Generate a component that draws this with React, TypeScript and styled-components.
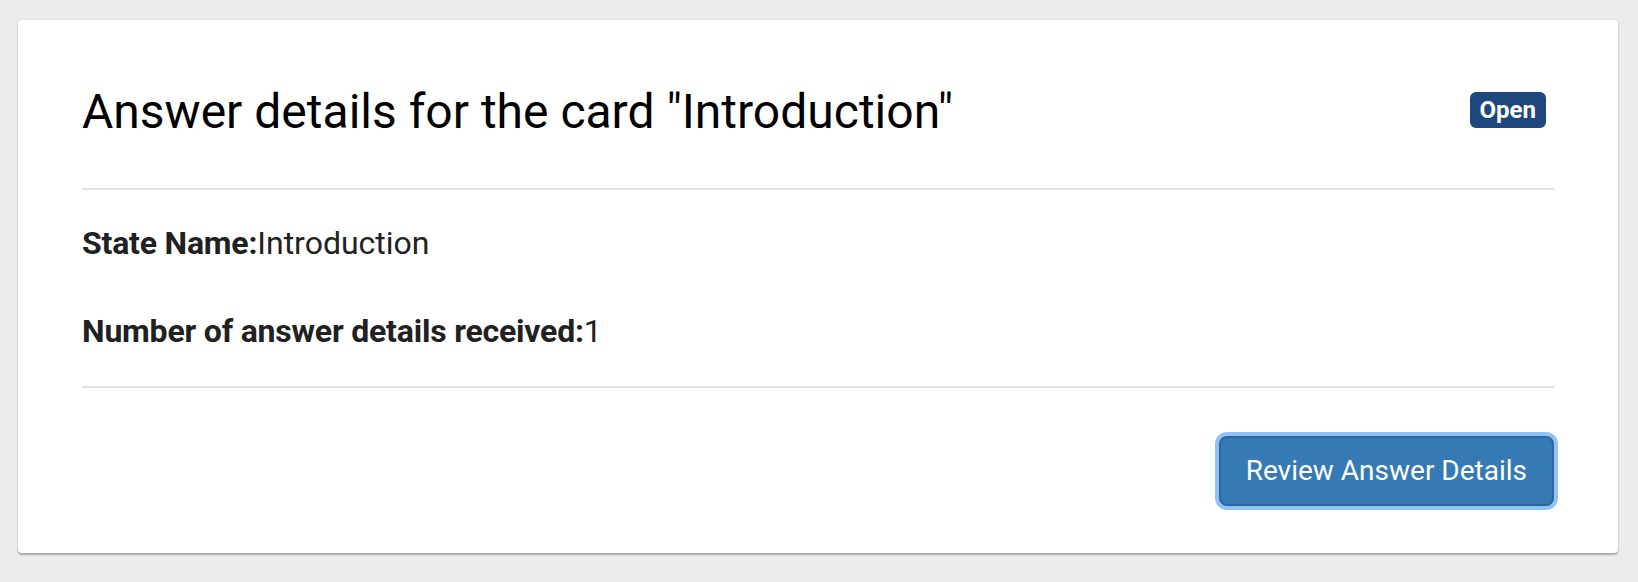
import React from "react";
import styled, { createGlobalStyle } from "styled-components";

const GlobalStyle = createGlobalStyle`
  html, body {
    margin: 0;
    padding: 0;
    background: #ececec;
    font-family: Roboto, "Liberation Sans", Arial, sans-serif;
  }
  * { box-sizing: border-box; }
`;

const Page = styled.div`
  padding: 20px 20px 20px 18px;
`;

const Card = styled.section`
  background: #ffffff;
  border-radius: 4px;
  box-shadow: 0 2px 2px rgba(0, 0, 0, 0.28), 0 0 2px rgba(0, 0, 0, 0.1);
  padding: 64px 64px 47px;
`;

const Header = styled.header`
  display: flex;
  align-items: flex-start;
  justify-content: space-between;
  padding-bottom: 48px;
  border-bottom: 2px solid #e3e3e3;
`;

const Title = styled.h3`
  margin: 0;
  font-size: 48px;
  line-height: 56px;
  font-weight: 400;
  color: #000000;
`;

const Badge = styled.span`
  margin: 8px 8px 0 0;
  background: #1e487d;
  color: #ffffff;
  font-size: 24px;
  font-weight: 700;
  line-height: 28px;
  padding: 4px 10px;
  border-radius: 6px;
`;

const Details = styled.div`
  display: flex;
  flex-direction: column;
  gap: 40px;
  padding: 29px 0 31px;
  border-bottom: 2px solid #dde1e6;
`;

const DetailRow = styled.p`
  margin: 0;
  font-size: 32px;
  line-height: 48px;
  color: #212121;
`;

const Label = styled.strong`
  font-weight: 700;
  letter-spacing: -0.2px;
`;

const Footer = styled.div`
  display: flex;
  justify-content: flex-end;
  padding-top: 48px;
`;

const PrimaryButton = styled.button`
  font-family: inherit;
  font-size: 28px;
  line-height: 40px;
  padding: 13px 25px;
  color: #ffffff;
  background: #367ab5;
  border: 2px solid #2d6699;
  border-radius: 8px;
  box-shadow: 0 0 0 4px #8fc2f6;
  cursor: pointer;
`;

export default function App() {
  return (
    <>
      <GlobalStyle />
      <Page>
        <Card>
          <Header>
            <Title>Answer details for the card "Introduction"</Title>
            <Badge>Open</Badge>
          </Header>
          <Details>
            <DetailRow>
              <Label>State Name:</Label>Introduction
            </DetailRow>
            <DetailRow>
              <Label>Number of answer details received:</Label>1
            </DetailRow>
          </Details>
          <Footer>
            <PrimaryButton>Review Answer Details</PrimaryButton>
          </Footer>
        </Card>
      </Page>
    </>
  );
}
